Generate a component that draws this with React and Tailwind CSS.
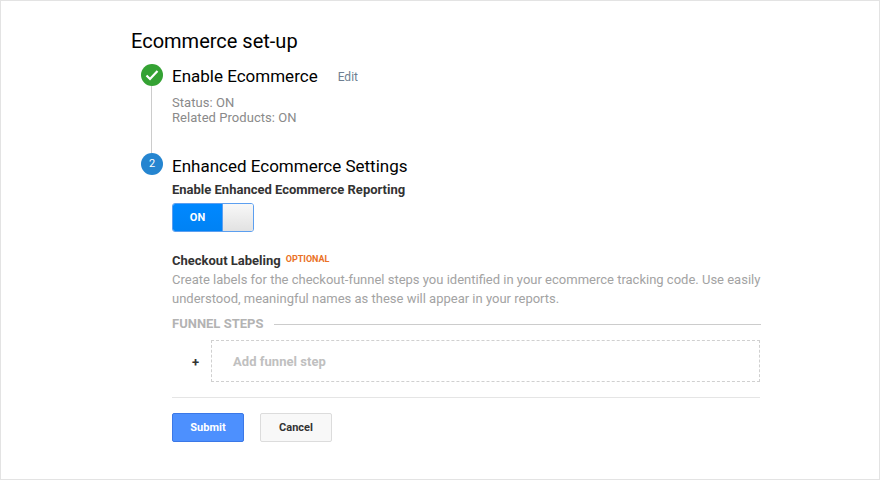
import React from "react";

export default function App() {
  return (
    <div className="w-[880px] h-[480px] border border-[#e3e3e3] bg-white text-black font-['Roboto',sans-serif] pl-[130px] pt-[28px] overflow-hidden">
      <h1 className="text-[20px] leading-[24px] font-normal">Ecommerce set-up</h1>
      <div className="ml-[10px] mt-[11px] w-[620px]">
        <div className="flex h-[89px]">
          <div className="w-[21px] flex flex-col items-center mr-[10px]">
            <div className="w-[22px] h-[22px] shrink-0 rounded-full bg-[#34a233] flex items-center justify-center">
              <svg width="14" height="12" viewBox="0 0 14 12" fill="none">
                <path d="M1.5 6.5 L5 10 L12.5 2" stroke="#fff" strokeWidth="2.2" />
              </svg>
            </div>
            <div className="w-[1px] flex-1 bg-[#cccccc]" />
          </div>
          <div>
            <div className="flex items-center h-[22px] pt-[2px]">
              <span className="text-[17px] leading-[22px]">Enable Ecommerce</span>
              <span className="ml-[20px] pt-[2px] text-[12px] leading-[22px] text-[#6f7f91]">Edit</span>
            </div>
            <div className="mt-[9px] text-[13px] leading-[15px] tracking-[0.05px] text-[#8a8a8a]">
              <div>Status: ON</div>
              <div>Related Products: ON</div>
            </div>
          </div>
        </div>
        <div className="flex">
          <div className="w-[22px] mr-[9px] shrink-0">
            <div className="w-[22px] h-[22px] rounded-full bg-[#2585d0] text-white text-[11px] flex items-center justify-center">2</div>
          </div>
          <div className="flex-1 min-w-0">
            <div className="mt-[2px] text-[17px] leading-[22px]">Enhanced Ecommerce Settings</div>
            <div className="mt-[5px] text-[13px] leading-[16px] font-bold text-[#333333]">Enable Enhanced Ecommerce Reporting</div>
            <div className="mt-[5px] w-[82px] h-[29px] flex rounded-[3px] border border-[#5c9ff0] overflow-hidden">
              <div className="w-[50px] pt-[2px] bg-gradient-to-b from-[#0088ff] to-[#0082f4] border-r border-[#5c9ff0] text-white text-[11px] font-bold flex items-center justify-center">ON</div>
              <div className="flex-1 bg-gradient-to-b from-[#f8f8f8] to-[#e2e2e2]" />
            </div>
            <div className="mt-[21px] flex items-start">
              <span className="text-[13px] leading-[16px] font-bold text-[#333333]">Checkout Labeling</span>
              <span className="ml-[5px] text-[9px] leading-[12px] font-bold text-[#ea7125]">OPTIONAL</span>
            </div>
            <p className="mt-[1px] w-[589px] text-[13px] leading-[19px] text-[#a3a3a3]">
              Create labels for the checkout-funnel steps you identified in your ecommerce tracking code. Use easily understood, meaningful names as these will appear in your reports.
            </p>
            <div className="mt-[8px] flex items-center h-[16px]">
              <span className="text-[13px] font-bold text-[#b3b3b3]">FUNNEL STEPS</span>
              <div className="ml-[11px] flex-1 h-[1px] bg-[#cccccc]" />
            </div>
            <div className="mt-[8px] flex items-center w-[588px]">
              <span className="w-[39px] pl-[20px] pt-[2px] text-[13px] leading-none font-bold text-[#333333]">+</span>
              <div className="flex-1 h-[42px] border border-dashed border-[#d0d0d0] flex items-center pl-[21px] pt-[2px] text-[13px] tracking-[0.05px] font-bold text-[#c0c0c0]">Add funnel step</div>
            </div>
            <div className="mt-[15px] w-[588px] h-[1px] bg-[#e5e5e5]" />
            <div className="mt-[15px] flex gap-[16px]">
              <button className="w-[72px] h-[29px] pt-[2px] rounded-[2px] border border-[#3b78e7] bg-[#4d90fe] text-white text-[11px] font-bold">Submit</button>
              <button className="w-[72px] h-[29px] pt-[2px] rounded-[2px] border border-[#dcdcdc] bg-[#f8f8f8] text-[#333333] text-[11px] font-bold">Cancel</button>
            </div>
          </div>
        </div>
      </div>
    </div>
  );
}
